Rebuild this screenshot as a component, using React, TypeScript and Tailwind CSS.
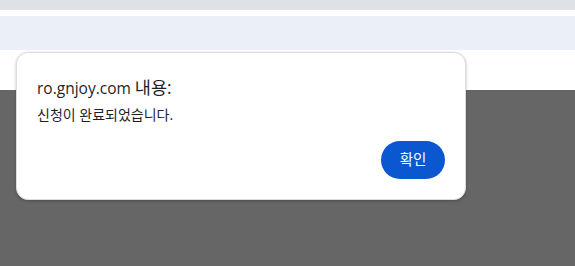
import React from "react";

const font = { fontFamily: '"Open Sans", Roboto, "Noto Sans CJK KR", sans-serif' };

const App: React.FC = () => {
  return (
    <div className="relative w-[575px] h-[266px] overflow-hidden bg-white" style={font}>
      {/* page behind the alert */}
      <div className="flex flex-col h-full">
        <div className="h-[10px] bg-[#dee1e6]" />
        <div className="h-[6px] bg-white" />
        <div className="h-[34px] bg-[#ebeff8]" />
        <div className="h-[40px] bg-white" />
        <div className="flex-1 bg-[#666666]" />
      </div>

      {/* alert dialog */}
      <div className="absolute left-[16px] top-[52px] w-[450px] h-[148px] rounded-[12px] border border-[#dadce0] bg-white shadow-[0_1px_3px_rgba(0,0,0,0.25)] flex flex-col pt-[23px] pl-[20px] pr-[20px] pb-[20px]">
        <p className="text-[15.5px] leading-[22px] text-[#1f1f1f]">
          ro.gnjoy.com <span className="text-[17.5px]">내용:</span>
        </p>
        <p className="mt-[7px] text-[14px] leading-[18px] text-[#1f1f1f]">신청이 완료되었습니다.</p>
        <div className="mt-auto flex justify-end">
          <button className="w-[64px] h-[38px] rounded-full bg-[#0b57d0] text-white text-[14.5px]">
            확인
          </button>
        </div>
      </div>
    </div>
  );
};

export default App;
